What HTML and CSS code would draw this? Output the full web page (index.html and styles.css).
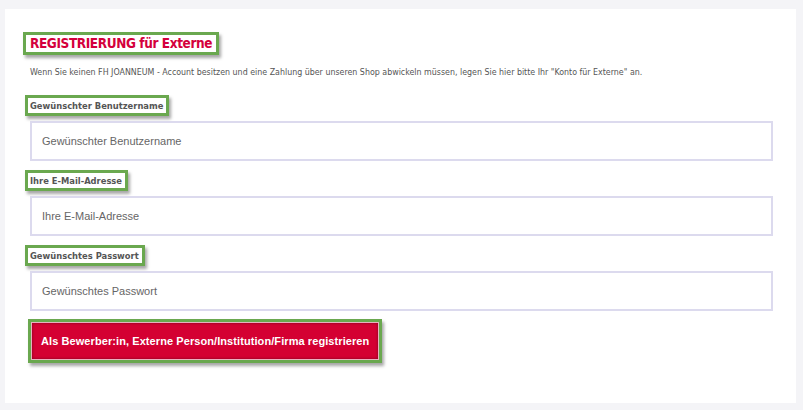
FILE: index.html
```html
<!DOCTYPE html>
<html lang="de">
<head>
  <meta charset="UTF-8">
  <title>Registrierung für Externe</title>
  <link rel="stylesheet" href="styles.css">
</head>
<body>
  <div class="card">
    <h1 class="title mark">REGISTRIERUNG für Externe</h1>
    <p class="intro">Wenn Sie keinen FH JOANNEUM - Account besitzen und eine Zahlung über unseren Shop abwickeln müssen, legen Sie hier bitte Ihr "Konto für Externe" an.</p>

    <div class="field">
      <label class="mark" for="username">Gewünschter Benutzername</label>
      <input type="text" id="username" placeholder="Gewünschter Benutzername">
    </div>
    <div class="field">
      <label class="mark" for="email">Ihre E-Mail-Adresse</label>
      <input type="text" id="email" placeholder="Ihre E-Mail-Adresse">
    </div>
    <div class="field">
      <label class="mark" for="password">Gewünschtes Passwort</label>
      <input type="text" id="password" placeholder="Gewünschtes Passwort">
    </div>

    <div class="submit-wrap mark">
      <button class="submit">Als Bewerber:in, Externe Person/Institution/Firma registrieren</button>
    </div>
  </div>
</body>
</html>
```

FILE: styles.css
```css
body {
  background-color: #f4f4f7;
  font-family: "DejaVu Sans", sans-serif;
  margin: 0;
  padding: 9px 7px 7px 5px;
}

.card {
  background-color: #fff;
  height: 394px;
  box-sizing: border-box;
  padding: 23px 23px 0 18px;
}

/* green highlight boxes */
.mark {
  display: inline-block;
  border: 3px solid #6aa84f;
  box-shadow: 2px 3px 3px rgba(0, 0, 0, 0.35);
  background-color: #fff;
}

.title {
  margin: 0;
  padding: 0 4px 0 4px;
  height: 17px;
  font-size: 13.5px;
  font-weight: bold;
  font-stretch: condensed;
  letter-spacing: -0.4px;
  color: #d4003c;
  line-height: 17px;
}

.intro {
  margin: 11px 0 17px 7px;
  font-size: 8.8px;
  line-height: 12px;
  font-stretch: condensed;
  color: #555;
}

.field {
  display: flex;
  flex-direction: column;
  align-items: flex-start;
  margin-bottom: 9px;
}

.field label {
  margin-left: 2px;
  font-size: 9.3px;
  font-weight: bold;
  font-stretch: condensed;
  color: #555;
  padding: 1px 3px 1px 2px;
  line-height: 13px;
}

.field input {
  align-self: stretch;
  margin: 5px 0 0 7px;
  height: 40px;
  box-sizing: border-box;
  border: 2px solid #dcdaee;
  padding: 0 10px;
  font-family: "Liberation Sans", Arial, sans-serif;
  font-size: 11px;
  color: #666;
  outline: none;
}

.field input::placeholder {
  color: #666;
}

.submit-wrap {
  margin: -1px 0 0 5px;
  padding: 0;
}

.submit {
  display: block;
  background-color: #d40032;
  color: #fff;
  border: 1px solid #e8b0bf;
  box-shadow: inset 0 0 3px rgba(0, 0, 0, 0.4);
  padding: 0 9px;
  height: 38px;
  font-family: "Liberation Sans", Arial, sans-serif;
  font-size: 11px;
  font-weight: bold;
  letter-spacing: 0.08px;
  cursor: pointer;
}
```
